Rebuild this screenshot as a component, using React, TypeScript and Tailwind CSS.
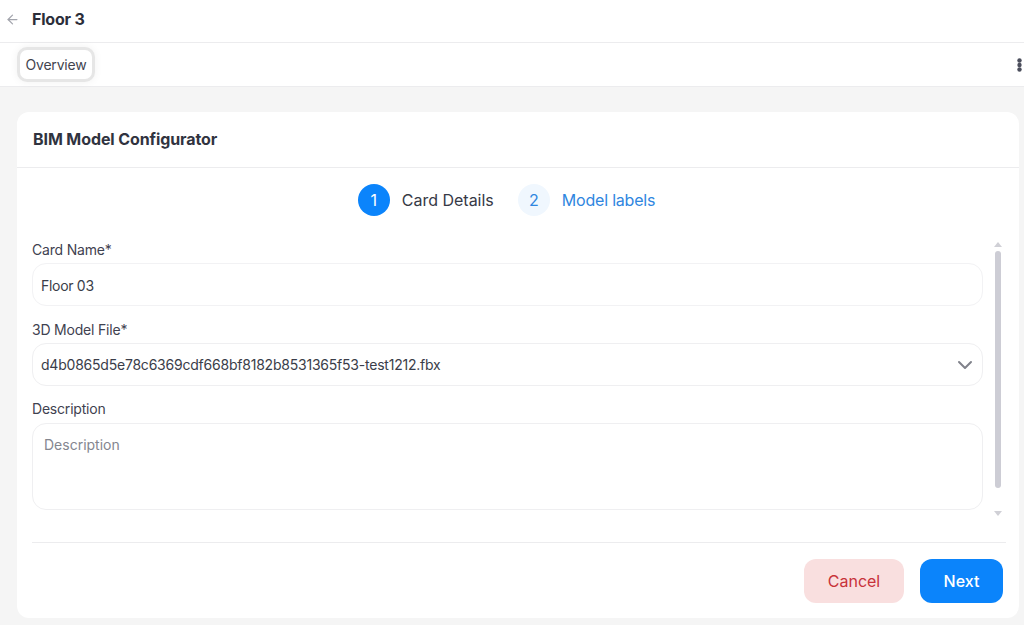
import { ArrowLeft, ChevronDown } from "lucide-react";

function Field({ label, children, className }: { label: string; children: React.ReactNode; className?: string }) {
  return (
    <div className={className}>
      <div className="text-[14px] leading-[20px] text-[#3f4250] tracking-[-0.2px]">{label}</div>
      {children}
    </div>
  );
}

export default function App() {
  return (
    <div className="w-[1024px] h-[625px] overflow-hidden bg-[#f5f5f5] flex flex-col font-['Inter',sans-serif]">
      <header className="h-[43px] shrink-0 bg-white border-b border-[#ececee] flex items-center pl-[5px] pb-[4px]">
        <ArrowLeft className="w-[15px] h-[15px] text-[#a3a5ad]" strokeWidth={2} />
        <h1 className="ml-[12px] text-[16px] font-bold text-[#2b2e3a] tracking-[-0.2px]">Floor 3</h1>
      </header>
      <nav className="h-[44px] shrink-0 bg-white border-b border-[#ececee] flex items-center pl-[17px] pr-[2px] justify-between">
        <div className="h-[35px] w-[78px] rounded-[10px] border-[3px] border-[#e6e6e6] bg-white shadow-[0_0_8px_rgba(0,0,0,0.06)] flex items-center justify-center text-[14px] text-[#42444f] tracking-[-0.2px]">
          Overview
        </div>
        <svg width="5" height="14" viewBox="0 0 5 14" className="text-[#4b4e5c]" fill="currentColor">
          <circle cx="2.5" cy="2.5" r="2.2" />
          <circle cx="2.5" cy="7" r="2.2" />
          <circle cx="2.5" cy="11.5" r="2.2" />
        </svg>
      </nav>
      <main className="flex-1 px-[17px] pr-[5px] pt-[25px] pb-[7px] flex min-h-0">
        <section className="flex-1 bg-white rounded-[12px] flex flex-col min-w-0">
          <div className="h-[56px] shrink-0 border-b border-[#ececee] flex items-center pl-[16px] pb-[2px]">
            <h2 className="text-[16px] font-bold text-[#30333f] tracking-[-0.1px]">BIM Model Configurator</h2>
          </div>
          <div className="h-[65px] shrink-0 flex items-center justify-center gap-[24px] pb-[2px] pr-[23px]">
            <div className="flex items-center gap-[12px]">
              <span className="w-[32px] h-[32px] rounded-full bg-[#0b84fb] text-white flex items-center justify-center text-[16px]">1</span>
              <span className="text-[16px] text-[#363946] tracking-[0px]">Card Details</span>
            </div>
            <div className="flex items-center gap-[12px]">
              <span className="w-[32px] h-[32px] rounded-full bg-[#f0f7fe] text-[#2f86e0] flex items-center justify-center text-[16px]">2</span>
              <span className="text-[16px] text-[#2f86e0] tracking-[-0.2px]">Model labels</span>
            </div>
          </div>
          <div className="flex-1 min-h-0 flex pl-[15px] pr-[16px]">
            <div className="w-[951px] shrink-0 pt-[7px]">
              <Field label="Card Name*">
                <div className="mt-[3px] h-[43px] rounded-[14px] border border-[#f2f2f4] flex items-center pl-[8px] pt-[2px] text-[14px] text-[#3a3d49] tracking-[-0.3px]">Floor 03</div>
              </Field>
              <Field label="3D Model File*" className="mt-[14px]">
                <div className="mt-[3px] h-[43px] rounded-[14px] border border-[#efeff1] flex items-center justify-between pl-[8px] pr-[5px] text-[14px] text-[#3a3d49] tracking-[-0.22px]">
                  <span>d4b0865d5e78c6369cdf668bf8182b8531365f53-test1212.fbx</span>
                  <ChevronDown className="w-[24px] h-[24px] text-[#80828b]" strokeWidth={2} />
                </div>
              </Field>
              <Field label="Description" className="mt-[13px]">
                <div className="mt-[4px] h-[87px] rounded-[14px] border border-[#efeff1] pl-[11px] pt-[11px] text-[14px] leading-[20px] text-[#84868f]">Description</div>
              </Field>
            </div>
            <div className="ml-[12px] w-[8px] relative">
              <span className="absolute top-[9px] left-[-1px] w-0 h-0 border-x-[4px] border-x-transparent border-b-[5px] border-b-[#d0d0d6]" />
              <span className="absolute top-[18px] bottom-[54px] left-[0px] w-[6px] rounded-[3px] bg-[#cdcdd5]" />
              <span className="absolute bottom-[26px] left-[-1px] w-0 h-0 border-x-[4px] border-x-transparent border-t-[5px] border-t-[#d0d0d6]" />
            </div>
          </div>
          <div className="ml-[15px] mr-[13px] h-[76px] shrink-0 border-t border-[#ececee] flex items-start justify-end gap-[16px] pt-[16px] pr-[3px]">
            <button className="w-[100px] h-[44px] rounded-[12px] bg-[#f9dfdf] text-[#c8323a] text-[16px]">Cancel</button>
            <button className="w-[83px] h-[44px] rounded-[12px] bg-[#0b84fb] text-white text-[16px] font-medium">Next</button>
          </div>
        </section>
      </main>
    </div>
  );
}
